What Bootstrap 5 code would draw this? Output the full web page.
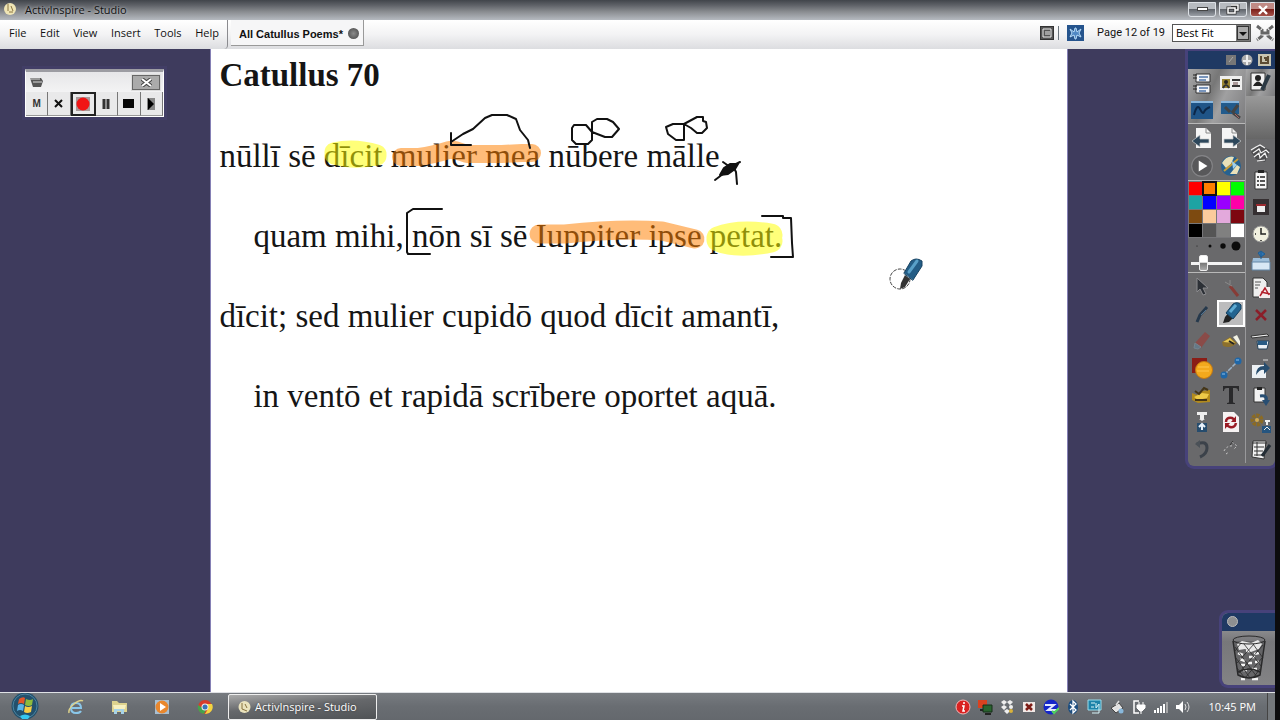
<!DOCTYPE html>
<html lang="en">
<head>
<meta charset="utf-8">
<meta name="viewport" content="width=device-width, initial-scale=1">
<title>ActivInspire - Studio</title>
<link rel="stylesheet" href="https://cdn.jsdelivr.net/npm/bootstrap@5.3.0/dist/css/bootstrap.min.css">
<style>
  body { font: 12px/16px "Open Sans", "Noto Sans", sans-serif; color: #111; background: #0c0c0e; }
  button { padding: 0; border: 0; background: none; color: inherit; }
  svg { display: block; flex: none; }
  .studio { min-height: 100vh; padding-right: 5px; }
  .titlebar { height: 20px; background: linear-gradient(#41454b 0, #5d6066 25%, #8b8e92 60%, #b5bac0 100%); }
  .titlebar h1 { font-size: 11px; line-height: 20px; text-shadow: 0 0 3px #c7cbd0; }
  .winbtns { gap: 3px; padding-top: 2px; }
  .winbtn { width: 28px; height: 15px; border: 1px solid #dde1e6; border-radius: 0 0 3px 3px; background: linear-gradient(#b7bbc0 45%, #60656c 50%, #9a9fa6); display: grid; place-items: center; }
  .winbtn.shut { width: 25px; background: linear-gradient(#c08a85 45%, #7d211b 50%, #a6534b); }
  .menubar { height: 29px; background: linear-gradient(#fff, #f3f3f4 50%, #dcdde0); }
  .menus { width: 228px; padding: 5px 8px 0 9px; border-right: 1px solid #8b8b8f; border-radius: 0 0 4px 0; }
  .menus button { height: 16px; font-size: 11px; }
  .doctab { height: 26px; margin-left: 3px; padding: 2px 4px 0 8px; border: 1px solid #999; border-width: 0 1px 1px 0; font: bold 11px/16px "Liberation Sans", sans-serif; background: #f6f6f7; gap: 5px; }
  .closedot { width: 11px; height: 11px; border-radius: 50%; background: radial-gradient(#8b8b8b, #444); }
  .pageno { font: 11px/16px Roboto, sans-serif; margin: 0 7px 0 13px; }
  .fit { width: 79px; height: 18px; border: 1px solid #555; background: #fff; }
  .fit select { appearance: none; border: 0; background: none; font-size: 11px; line-height: 16px; padding: 0 0 0 3px; width: 100%; outline: 0; }
  .fit svg { pointer-events: none; right: 0; top: 0; }
  .desk { background: #3e3b5d; overflow: hidden; }
  .sheet { width: 67.3%; margin-left: 16.5%; background: #fff; border-left: 1px solid #8580b5; border-right: 1px solid #8580b5; padding: 7px 8px 0; }
  .poem { font-family: "Liberation Serif", serif; font-size: 33px; line-height: 80px; color: #151515; white-space: nowrap; }
  .poem h2 { font: bold 33px/38px "Liberation Serif", serif; margin: 0 0 22px; }
  .poem p { margin: 0; }
  .poem .inset { padding-left: 34px; }
  .ink { left: 0; top: 0; overflow: visible; pointer-events: none; }
  .recorder { left: 25px; top: 20px; width: 139px; border: 1px solid #fff; border-top: 3px solid #9c9ca2; background: #e9e9ec; box-shadow: 0 0 0 3px #423e66; }
  .recorder header { height: 20px; padding: 0 3px; background: linear-gradient(#e6e6e8, #f3f3f4); }
  .recshut { width: 28px; height: 15px; background: #aaa; border: 1px solid #666; outline: 1px solid #ddd; display: grid; place-items: center; }
  .recbtn { flex: 1 1 0; height: 24px; display: grid; place-items: center; font: bold 10px/12px "Liberation Sans", sans-serif; color: #333; border-right: 1px solid #777; border-bottom: 1px solid #999; background: #e9e9ea; }
  .recbtn.on { border: 2px solid #222; }
  .toolbox { right: 0; top: 2px; width: 87px; padding-bottom: 3px; background: #69696b; border-radius: 0 0 6px 6px; box-shadow: 0 0 0 3px #47427a; }
  .capbar { height: 18px; background: #1f3963; gap: 5px; padding-right: 4px; }
  .tools { width: 58px; border-right: 1px solid #99999b; }
  .pair { display: grid; grid-template-columns: 1fr 1fr; grid-auto-rows: 27px; }
  .pair.roomy { grid-auto-rows: 28px; }
  .tile { display: grid; place-items: center; width: 100%; height: 100%; min-height: 27px; }
  .tile.on { border: 2px solid #fff; background: #bcbcbd; }
  .mottle { background: linear-gradient(115deg, #a9a9aa, #777 40%, #a0a0a1 60%, #7b7b7d); }
  .rule { border-bottom: 1px solid #b8b8b8; }
  .swatches { display: grid; grid-template-columns: repeat(4, 1fr); gap: 1px; padding: 1px; background: #77777a; }
  .swatches button { height: 13px; }
  .swatches .on { outline: 2px solid #111; outline-offset: -1px; }
  .nibs { height: 16px; }
  .thick { width: 100%; height: 18px; appearance: none; background: none; margin: 0; padding: 0 3px; display: block; }
  .thick::-webkit-slider-runnable-track { height: 3px; background: #f4f4f4; }
  .thick::-webkit-slider-thumb { appearance: none; width: 9px; height: 16px; margin-top: -7px; border: 1px solid #eee; border-radius: 2px; background: linear-gradient(#fff 45%, #777 50%, #aaa); }
  .sidetools { width: 29px; }
  .sidetools .tile { height: 27px; }
  .sidetools .space { height: 43px; background: linear-gradient(#999, #666); }
  .bin { right: 0; bottom: 7px; width: 53px; box-shadow: 0 0 0 3px #47427a; border-radius: 6px 0 0 6px; background: linear-gradient(#a9a9aa, #77777a 40%, #838385); overflow: hidden; }
  .bin header { height: 18px; background: #1f3963; padding: 3px 5px; }
  .taskbar { height: 28px; background: linear-gradient(#777b80, #696d72 50%, #64686d); border-top: 1px solid #dfe1e5; padding-left: 9px; }
  .quick { gap: 23px; margin-left: 25px; }
  .task { width: 149px; height: 26px; margin-left: 13px; padding: 0 9px; border: 1px solid #eee; border-radius: 2px; background: linear-gradient(175deg, #aaa, #66686b 45%, #505356); color: #fff; font-size: 11px; gap: 4px; text-shadow: 0 0 2px #333; }
  .tray { gap: 6px; }
  .clock { color: #fff; font-size: 11px; margin: 0 5px 0 12px; }
  .peek { width: 8px; height: 27px; border-left: 1px solid #444; background: #74787c; }
</style>
</head>
<body>
<div class="studio d-flex flex-column">

  <header class="titlebar d-flex align-items-start ps-1">
    <svg width="13" height="18" viewBox="0 0 13 18" class="me-2"><circle cx="6" cy="9" r="6" fill="#efe5b5"/><path d="M4 4v7M7 6l2 5M5 12h4" stroke="#8a7440" fill="none"/></svg>
    <h1 class="m-0 fw-normal">ActivInspire - Studio</h1>
    <div class="winbtns d-flex ms-auto">
      <button class="winbtn" aria-label="Minimize"><svg width="11" height="5"><rect x=".5" y=".5" width="10" height="3" fill="#fff" stroke="#444"/></svg></button>
      <button class="winbtn" aria-label="Restore"><svg width="14" height="11"><path d="M5 1h7v5H9M2 4h7v5H2z" fill="none" stroke="#333" stroke-width="3"/><path d="M5 1h7v5H9M2 4h7v5H2z" fill="none" stroke="#fff" stroke-width="1.5"/></svg></button>
      <button class="winbtn shut" aria-label="Close"><svg width="12" height="10"><path d="M2 1l8 8M10 1L2 9" stroke="#fff" stroke-width="2.4"/></svg></button>
    </div>
  </header>

  <div class="menubar d-flex align-items-start">
    <nav class="menus d-flex justify-content-between align-self-stretch">
      <button>File</button><button>Edit</button><button>View</button><button>Insert</button><button>Tools</button><button>Help</button>
    </nav>
    <div class="doctab d-flex align-items-center">All Catullus Poems*<button class="closedot" aria-label="Close flipchart"></button></div>
    <div class="d-flex align-items-center ms-auto pt-1">
      <button aria-label="Notes" class="pe-1 border-end border-secondary me-2"><svg width="14" height="14"><rect x=".5" y=".5" width="13" height="13" fill="#555" stroke="#333"/><path d="M3 3h8v8H3zM5 6h5M5 8h5" fill="none" stroke="#eee"/></svg></button>
      <button aria-label="Toggle desktop"><svg width="17" height="16"><rect width="17" height="16" fill="#25548d"/><path d="M3 4l4 3 1-4h1l1 4 4-3-2 4 2 4-4-2-1 4H8l-1-4-4 2 2-4z" fill="#4f88c4" stroke="#b9dcf7"/></svg></button>
      <span class="pageno">Page 12 of 19</span>
      <div class="fit position-relative">
        <select aria-label="Zoom"><option>Best Fit</option></select>
        <svg class="position-absolute" width="14" height="16"><rect width="14" height="16" fill="#777"/><rect x="1.500" y="1.500" width="11" height="13" fill="#aaa" stroke="#333"/><path d="M3 7h8l-4 4z" fill="#111"/></svg>
      </div>
      <button class="ms-1" aria-label="Resize"><svg width="20" height="18" viewBox="0 0 20 18"><path d="M2 2l5 4v6l-5 4M18 2l-5 4v6l5 4M7 9h6" stroke="#666" stroke-width="3" fill="none" stroke-dasharray="5 1"/></svg></button>
    </div>
  </div>

  <main class="desk flex-grow-1 d-flex position-relative">
    <article class="sheet position-relative">
      <div class="poem">
        <h2>Catullus 70</h2>
        <p>nūllī sē dīcit mulier mea nūbere mālle</p>
        <p class="inset">quam mihi, nōn sī sē Iuppiter ipse petat.</p>
        <p>dīcit; sed mulier cupidō quod dīcit amantī,</p>
        <p class="inset">in ventō et rapidā scrībere oportet aquā.</p>
      </div>
      <!-- pen and highlighter strokes over the poem -->
      <svg class="ink position-absolute" width="850" height="400">
        <g transform="translate(-211 -49)" fill="none" stroke-linecap="round" stroke-linejoin="round">
          <g opacity=".52">
            <path d="M334 152q20-5 43 2M334 155q20 6 43 1" stroke="#ff0" stroke-width="19"/>
            <path d="M401 157h18q14-2 30-7h6l12 4 35 0 20-1h10" stroke="#ff8000" stroke-width="18"/>
            <path d="M539 234h26q55-6 97-3l33 8" stroke="#ff8000" stroke-width="19"/>
            <path d="M718 238q20-8 53-3M718 240q20 8 53 1" stroke="#ff0" stroke-width="23"/>
          </g>
          <g stroke="#111" stroke-width="2">
            <path d="M451 133v12l20 0M451 145v-3L463 134 473 129 485 118 492 115H507L516 119 520 130 528 140 530 148"/>
            <path d="M592 132L586 125H574L572 128V140L576 144H588L592 140V122L597 119H607L613 122 619 129 612 137H605L592 132"/>
            <path d="M684 124L673 124 666 127 668 134 676 140H684V124L697 117H703V121L706 122 707 128 702 133H697L691 128 684 124"/>
            <path d="M442 209h-29l-6 4v39l1 2h22M762 216h21v2h8l1 25 1 14h-22"/>
            <path d="M715 180l12-9M723 162l7 5 10-5M733 166l3 6 1 12"/>
            <path d="M720 175l4-7 6-4 8 0-3 5-7 5z" fill="#111"/>
          </g>
          <circle cx="900" cy="279" r="10" stroke="#444" stroke-dasharray="3 2"/>
          <path d="M901 283l4-8 5 4-5 8-5 2z" fill="#333"/>
          <path d="M904 273l7-12q5-4 11 0l0 5-9 14z" fill="#245d86" stroke="#174362"/>
          <path d="M909 272l8-11" stroke="#59a0c8" stroke-width="3"/>
        </g>
      </svg>
    </article>

    <section class="recorder position-absolute" aria-label="Recorder">
      <header class="d-flex align-items-center justify-content-between">
        <svg width="15" height="12"><path d="M1 2h11l2 3-2 6H4z" fill="#555"/><path d="M1 3h10M4 6h9" stroke="#ddd"/></svg>
        <button class="recshut" aria-label="Close recorder"><svg width="11" height="9"><path d="M1 1l9 7M10 1L1 8" stroke="#444" stroke-width="4"/><path d="M1 1l9 7M10 1L1 8" stroke="#fff" stroke-width="2"/></svg></button>
      </header>
      <div class="d-flex">
        <button class="recbtn">M</button>
        <button class="recbtn" aria-label="Cancel"><svg width="9" height="9"><path d="M1 1l7 7M8 1L1 8" stroke="#111" stroke-width="2"/></svg></button>
        <button class="recbtn on" aria-label="Record"><svg width="14" height="14"><rect width="14" height="14" fill="#a99"/><circle cx="7" cy="7" r="6.500" fill="#f01515"/></svg></button>
        <button class="recbtn" aria-label="Pause"><svg width="9" height="10"><path d="M2 0v10M6 0v10" stroke="#333" stroke-width="3"/></svg></button>
        <button class="recbtn" aria-label="Stop"><svg width="11" height="9"><rect width="11" height="9" fill="#080808"/></svg></button>
        <button class="recbtn" aria-label="Play"><svg width="8" height="12"><rect width="8" height="12" fill="#888"/><path d="M1 0l6 6-6 6z" fill="#000"/></svg></button>
      </div>
    </section>

    <section class="toolbox position-absolute" aria-label="Main toolbox">
      <div class="capbar d-flex align-items-center justify-content-end">
        <svg width="10" height="12"><path d="M0 1h10v10H0z" fill="#777"/><path d="M3 8l4-5" stroke="#aaa"/></svg>
        <svg width="12" height="12"><circle cx="6" cy="6" r="5.500" fill="#aaa"/><path d="M6 1v10M2 7h8" stroke="#eee" stroke-width="2"/></svg>
        <svg width="13" height="12"><path d="M0 0h13v12H0z" fill="#c9c5b0"/><path d="M3 2v7h7V2M6 4h2v3" fill="none" stroke="#5b4b33" stroke-width="2"/></svg>
      </div>
      <div class="d-flex">
        <div class="tools">
          <div class="pair mottle rule">
            <button class="tile" aria-label="Browsers"><svg width="20" height="22" viewBox="0 0 20 22"><path d="M4 2h14v8H4zM4 13h14v8H4z" fill="#f2f4f8" stroke="#333"/><path d="M1 3h4M1 6h4M1 14h4M1 17h4" stroke="#222"/><path d="M7 5h9M7 8h7M7 16h9M7 19h7" stroke="#5275a8" stroke-width="1.500"/></svg></button>
            <button class="tile" aria-label="Profiles"><svg width="22" height="16"><path d="M0 1h22v14H0z" fill="#eee"/><path d="M2 4h8v9H2z" fill="#9a8530"/><circle cx="6" cy="7" r="2" fill="#222"/><path d="M3 13q3-6 6 0M12 5h8M12 11h8" stroke="#333" stroke-width="2" fill="none"/><path d="M13 7h5v3h-5z" fill="#a99"/></svg></button>
            <button class="tile" aria-label="Annotate desktop"><svg width="22" height="20"><path d="M0 1h22v18H0z" fill="#1f5487"/><path d="M0 2h22" stroke="#88b6dd" stroke-width="2"/><path d="M3 15q3-12 6-6t4 3 6-5" fill="none" stroke="#0c2748" stroke-width="2"/></svg></button>
            <button class="tile" aria-label="Desktop tools"><svg width="22" height="20"><path d="M1 1h18v13H1z" fill="#225b8c"/><path d="M1 2h18" stroke="#88b6dd" stroke-width="2"/><path d="M5 7l5 5M18 5l-6 8M13 13l7 5" stroke="#444" stroke-width="3"/><path d="M15 14l4 4" stroke="#a66"/></svg></button>
          </div>
          <div class="pair roomy rule">
            <button class="tile" aria-label="Previous page"><svg width="20" height="22"><path d="M4 1h10l5 5v15H4z" fill="#f5f5f5"/><path d="M14 1v5h5" fill="none" stroke="#888"/><path d="M17 12H8V8l-8 6 8 6v-4h9z" fill="#2d475b" stroke="#ccc" stroke-width=".7"/></svg></button>
            <button class="tile" aria-label="Next page"><svg width="20" height="22"><path d="M1 1h10l5 5v15H1z" fill="#f5f5f5"/><path d="M11 1v5h5" fill="none" stroke="#888"/><path d="M3 12h9V8l8 6-8 6v-4H3z" fill="#2d475b" stroke="#ccc" stroke-width=".7"/></svg></button>
            <button class="tile" aria-label="Start lesson"><svg width="24" height="24" viewBox="0 0 22 22"><circle cx="11" cy="11" r="9.500" fill="#58585a" stroke="#858588"/><path d="M8 6l8 5-8 5z" fill="#fff"/></svg></button>
            <button class="tile" aria-label="Express poll"><svg width="22" height="22"><circle cx="11" cy="11" r="10" fill="#27618f"/><path d="M2 8q5-8 12-6l-3 7-5 4zM10 19l7-9 3 2-3 7z" fill="#e9e1b9"/><path d="M4 16l14-12" stroke="#c79d39" stroke-width="2"/><path d="M12 6l5 4-4 4z" fill="#9ed0ee"/></svg></button>
          </div>
          <div class="swatches">
            <button style="background:#f00" aria-label="Red"></button><button class="on" style="background:#ff8000" aria-label="Orange"></button><button style="background:#ff0" aria-label="Yellow"></button><button style="background:#0f0" aria-label="Green"></button>
            <button style="background:#1da3a3" aria-label="Teal"></button><button style="background:#00f" aria-label="Blue"></button><button style="background:#90f" aria-label="Purple"></button><button style="background:#ff00a8" aria-label="Pink"></button>
            <button style="background:#7d4a10" aria-label="Brown"></button><button style="background:#fbcb9c" aria-label="Peach"></button><button style="background:#e3a9dc" aria-label="Lilac"></button><button style="background:#7d0710" aria-label="Maroon"></button>
            <button style="background:#000" aria-label="Black"></button><button style="background:#555" aria-label="Dark grey"></button><button style="background:#808080" aria-label="Grey"></button><button style="background:#fff" aria-label="White"></button>
          </div>
          <div class="nibs d-flex justify-content-around align-items-center">
            <svg width="57" height="12"><g fill="#0b0b0b"><circle cx="9" cy="6" r=".5"/><circle cx="22" cy="6" r="1.500"/><circle cx="35" cy="6" r="2.700"/><circle cx="48" cy="6" r="4.500"/></g></svg>
          </div>
          <div class="rule"><input class="thick" type="range" min="0" max="100" value="20" aria-label="Pen width"></div>
          <div class="pair">
            <button class="tile" aria-label="Select"><svg width="18" height="20"><path d="M4 1l11 10-5 0 3 6-3 1-3-6-3 3z" fill="#2c3036" stroke="#8b8b8e"/></svg></button>
            <button class="tile" aria-label="Tools"><svg width="20" height="20"><path d="M9 9l8 10" stroke="#873c36" stroke-width="3"/><path d="M4 5l7 4M9 3v4" stroke="#8a8a8a"/></svg></button>
            <button class="tile" aria-label="Pen"><svg width="18" height="20"><path d="M4 18l3-7 7-8" stroke="#26394c" stroke-width="3" fill="none"/><path d="M8 11l5-5" stroke="#507493"/></svg></button>
            <button class="tile on" aria-label="Highlighter"><svg width="23" height="23"><path d="M6 15l4-5 6 4-6 6-6 1z" fill="#222"/><path d="M7 11l7-9q5-3 8 1v4l-8 10z" fill="#236490" stroke="#15405f"/><path d="M11 10l6-7" stroke="#5eabd3" stroke-width="3"/></svg></button>
            <button class="tile" aria-label="Eraser"><svg width="20" height="20"><path d="M3 12L13 1l5 4-9 12-5 1z" fill="#8a4b48"/><path d="M3 12l6 4-3 2-4-1z" stroke="#75858f" fill="#657987"/></svg></button>
            <button class="tile" aria-label="Fill"><svg width="20" height="18"><path d="M1 10l8-5 7 6q-6 6-14 3z" fill="#8c702d"/><path d="M2 10l7-4 5 5z" fill="#e6c756"/><path d="M12 5l4-2 3 6v5z" fill="#f2f2e5"/><path d="M8 9l5 3" stroke="#222" stroke-width="2" fill="none"/></svg></button>
            <button class="tile" aria-label="Shape"><svg width="22" height="22"><path d="M1 1h15v15H1z" fill="#8a1d16"/><circle cx="13" cy="13" r="8.500" fill="#f3a91d" stroke="#c47911"/><path d="M7 10h11M6 14h12" stroke="#ffc64e"/></svg></button>
            <button class="tile" aria-label="Connector"><svg width="22" height="22"><path d="M4 18l14-14" stroke="#9db4ca" stroke-width="1.500" stroke-dasharray="5 1"/><circle cx="4" cy="18" r="3.500" fill="#1f67a8"/><circle cx="18" cy="4" r="3.500" fill="#1f67a8"/><path d="M2 17h3M16 3h3" stroke="#8fc0e7"/></svg></button>
            <button class="tile" aria-label="Insert media"><svg width="22" height="20"><path d="M1 8l5 2 4-4 9-1v12l-12 1-6-3z" fill="#b18a1d"/><path d="M3 12l8-4 7 1-2 4-9 2z" fill="#edca48"/><path d="M4 6l4 3 5-6 4 2M4 15h12" stroke="#443517" stroke-width="2" fill="none"/></svg></button>
            <button class="tile" aria-label="Text"><svg width="20" height="22"><path d="M2 2h16v5h-1q0-3-3-3h-2v14q0 1 2 1v1H6v-1q2 0 2-1V4H6q-3 0-3 3H2z" fill="#29292b"/></svg></button>
            <button class="tile" aria-label="Edit text"><svg width="16" height="22"><path d="M3 1h10v3h-3v4h1l-3 2-3-2h1V4H3z" fill="#eee"/><path d="M3 12h10v9H3z" fill="#264c6d"/><path d="M8 19v-6M5 16l3-3 3 3" stroke="#e9f2fb" stroke-width="2" fill="none"/></svg></button>
            <button class="tile" aria-label="Reset page"><svg width="18" height="22"><path d="M1 1h11l5 5v15H1z" fill="#f6f2f2"/><path d="M4 11q0-5 6-4l3 2M14 12q-1 5-6 4l-4-2" stroke="#9a1b25" stroke-width="2.500" fill="none"/><path d="M14 5v6H9zM3 18v-6h5z" fill="#9a1b25"/></svg></button>
            <button class="tile" aria-label="Undo"><svg width="20" height="20"><path d="M5 5q10-4 10 4 0 6-7 9" stroke="#3c424a" stroke-width="3" fill="none"/><path d="M3 5l5-4v8z" fill="#4b5158"/></svg></button>
            <button class="tile" aria-label="Redo"><svg width="20" height="20"><path d="M3 12q3-6 10-5M11 3l5 4-4 4M5 15l3-2" stroke="#c7c7c7" fill="none" stroke-dasharray="2 2"/><path d="M9 6l3-4" stroke="#333"/></svg></button>
          </div>
        </div>
        <div class="sidetools">
          <button class="tile mottle" aria-label="Design mode"><svg width="22" height="22"><path d="M1 1h14v17H1z" fill="#f1f1f1" stroke="#333"/><circle cx="8" cy="6" r="3" fill="#222"/><path d="M3 14q5-9 10 0z" fill="#222"/><path d="M12 18l7-15" stroke="#2b3944" stroke-width="4"/></svg></button>
          <div class="space"></div>
          <button class="tile" aria-label="Handwriting"><svg width="24" height="22"><path d="M2 10l8-7 11 5-5 12-9-3z" fill="#4c4c4e"/><path d="M2 8l5-3 4-2 5 3M4 11l6-4 2 4 5-3 3 3M5 15l5-4 1 5 5-5 2 5M8 19l8-1" stroke="#f3f3f3" fill="none" stroke-width="1.200"/></svg></button>
          <button class="tile" aria-label="Voting"><svg width="16" height="22"><path d="M2 3h12v17H2z" fill="#f7f7f7" stroke="#333"/><path d="M5 1h6v3H5z" fill="#222"/><path d="M4 8h2M7 8h5M4 12h2M7 12h5M4 16h2M7 16h5" stroke="#222" stroke-width="1.500"/></svg></button>
          <button class="tile" aria-label="Device"><svg width="18" height="18"><path d="M1 1h16v16H1z" fill="#352f31"/><path d="M5 8h8v6H5z" fill="#eee"/><path d="M4 7h10" stroke="#9b2a2f" stroke-width="2"/></svg></button>
          <button class="tile" aria-label="Clock"><svg width="18" height="18"><circle cx="9" cy="9" r="8" fill="#f1f0df" stroke="#999"/><path d="M9 3v6h5M9 15v1M3 9h1" stroke="#222" stroke-width="1.500" fill="none"/></svg></button>
          <button class="tile" aria-label="Resources"><svg width="20" height="22"><path d="M2 8h16l1 5H1z" fill="#9dbed9"/><path d="M1 12h18v8H1z" fill="#d8e8f5" stroke="#6286a6"/><path d="M10 9V2M7 3l3-2 4 3-4 3z" stroke="#1e5d93" fill="#2f75b1"/></svg></button>
          <button class="tile" aria-label="Export to PDF"><svg width="20" height="22"><path d="M2 1h10l4 4v15H2z" fill="#eee" stroke="#333"/><path d="M4 5h6M4 8h5M4 11h3" stroke="#555"/><path d="M8 10h11v11H8z" fill="#f6eded"/><path d="M9 19l5-8 4 7M10 15l9 2" stroke="#b21e2a" stroke-width="1.500" fill="none"/></svg></button>
          <button class="tile" aria-label="Delete"><svg width="14" height="14"><path d="M2 2l10 10M12 2L2 12" stroke="#8b1e29" stroke-width="2.500"/></svg></button>
          <button class="tile" aria-label="Camera"><svg width="22" height="22"><path d="M1 5l16-2 2 2-17 2z" fill="#eee" stroke="#333"/><path d="M7 10h12l-2 8H8z" fill="#eaf0f5" stroke="#24425a"/><path d="M8 12h9" stroke="#285b85" stroke-width="4"/></svg></button>
          <button class="tile" aria-label="Import"><svg width="20" height="20"><path d="M1 6h14v13H1z" fill="#edf1f4"/><path d="M5 16q0-9 8-9V3l6 6-6 6v-4q-4-1-8 5z" fill="#274d6e"/><path d="M12 1h5" stroke="#ddd"/></svg></button>
          <button class="tile" aria-label="Paste"><svg width="18" height="20"><path d="M2 2h11v14H2z" fill="#f2f2f2" stroke="#333"/><path d="M5 1h5v3H5z" fill="#222"/><path d="M8 10q8-1 6 5" stroke="#284e72" stroke-width="3" fill="none"/><path d="M10 14h8l-4 6z" fill="#284e72"/></svg></button>
          <button class="tile" aria-label="Action"><svg width="22" height="22"><circle cx="7" cy="8" r="4.500" fill="none" stroke="#8b6b24" stroke-width="4" stroke-dasharray="3 1"/><circle cx="7" cy="8" r="2" fill="#d1aa50"/><path d="M17 8v5M15 9h5" stroke="#eee" stroke-width="2"/><path d="M12 14h9v7h-9z" fill="#26557f"/><path d="M14 18l3-3 3 3" stroke="#eee" fill="none"/></svg></button>
          <button class="tile" aria-label="Notebook"><svg width="22" height="22"><path d="M3 2l13 0-2 18-12-2z" fill="#f2f2f2" stroke="#333"/><path d="M2 4h15M4 8h10M4 12h9M4 16h8M7 3v14" stroke="#333"/><path d="M12 17l8-11" stroke="#242d35" stroke-width="3"/></svg></button>
        </div>
      </div>
    </section>

    <section class="bin position-absolute" aria-label="Recycle bin">
      <header><svg width="11" height="11"><circle cx="5.500" cy="5.500" r="5" fill="#8d8f91" stroke="#bbb"/></svg></header>
      <svg class="mx-auto" width="42" height="54" viewBox="0 0 40 54">
        <path d="M4 10l5 34q11 6 22 0l5-34z" fill="#4e4e50" opacity=".5"/>
        <path d="M8 13l5-3 9 2 7-3 4 4-3 5-8 3-6-3-6 1z" fill="#e8e8e8"/>
        <path d="M9 22l5 2M17 20h5M25 23l5-1M11 28l5 2M20 26h6M12 34h4M19 32h4M26 31h4M14 39h4M23 38h5M12 48h4M23 48h6" stroke="#f5f5f5" stroke-width="2.500"/>
        <g fill="none" stroke="#29292a"><ellipse cx="20" cy="9" rx="16" ry="4"/><path d="M4 10l5 34q11 6 22 0l5-34M9 41q11-6 22 0" stroke-width="1.500"/><path d="M6 16l22 30M7 27l14 20M15 13l17 22M24 13l10 14M34 14L10 42M25 13L8 32M33 27L16 47M31 38l-7 9M12 12L6 20M8 37l7 9" stroke-width=".8"/></g>
      </svg>
    </section>
  </main>

  <footer class="taskbar d-flex align-items-center">
    <button aria-label="Start"><svg width="32" height="27" viewBox="0 0 32 27"><circle cx="16" cy="13" r="13.500" fill="#23506c"/><circle cx="16" cy="13" r="12" fill="none" stroke="#4b84a0"/><path d="M10 6q4-3 6-1l-1 6q-3-2-6 0z" fill="#e1562a"/><path d="M17 6q4 2 7 0l-1 6q-3 2-7 0z" fill="#8dbb3d"/><path d="M9 12q3-2 6 0l-1 6q-3-2-6 0z" fill="#5ab4e7"/><path d="M16 13q3 2 7 0l-1 6q-4 2-7 0z" fill="#f7cc45"/><path d="M11 23q5-3 10 0l-2 3h-6z" fill="#36c8f0"/></svg></button>
    <div class="quick d-flex align-items-center">
      <button aria-label="Internet Explorer"><svg width="20" height="20"><path d="M5 11h10q0-5-5-5t-5 5 5 5q4 0 5-2" fill="none" stroke="#8ac7ea" stroke-width="2"/><path d="M3 16Q2 12 8 7t9-3" fill="none" stroke="#ded38b" stroke-width="1.500"/></svg></button>
      <button aria-label="Explorer"><svg width="20" height="20"><path d="M3 4h5l2 2h8v9H3z" fill="#ddd28e"/><path d="M4 8h13l-1 4H5z" fill="#f7f0c0"/><path d="M5 12h10v5h-3v-3H8v3H5z" fill="#a6d2e8"/></svg></button>
      <button aria-label="Media Player"><svg width="20" height="20"><path d="M3 3h14v14H3z" fill="#a8bfd2"/><circle cx="10" cy="10" r="6.500" fill="#e9872d"/><path d="M8 6l6 4-6 4z" fill="#fff"/></svg></button>
      <button aria-label="Chrome"><svg width="20" height="20"><circle cx="10" cy="10" r="7" fill="#d83c2b"/><path d="M3 8a7 7 0 0 0 6 9l3-6-6-1z" fill="#45a34d"/><path d="M10 17a7 7 0 0 0 7-10h-6l2 5z" fill="#f4d440"/><circle cx="10" cy="10" r="3.500" fill="#eee"/><circle cx="10" cy="10" r="2.500" fill="#3973b9"/></svg></button>
    </div>
    <button class="task d-flex align-items-center"><svg width="13" height="14"><circle cx="6.500" cy="7" r="6" fill="#eae3bd"/><path d="M4 3v6l5 2M7 4l2 4" fill="none" stroke="#86713c"/></svg>ActivInspire - Studio</button>
    <div class="tray d-flex align-items-center ms-auto">
      <svg width="16" height="16"><circle cx="8" cy="8" r="7" fill="#d92222" stroke="#f2b6b6"/><path d="M9 3v2M7 7h2l-1 5h2" stroke="#fff" stroke-width="1.500" fill="none"/></svg>
      <svg width="16" height="16"><path d="M1 1h9v8H1z" fill="#d94220"/><path d="M6 6h9v7H6z" fill="#29642f" stroke="#162f19"/><path d="M3 11h3M8 15h6" stroke="#222" stroke-width="2"/></svg>
      <svg width="16" height="16"><path d="M2 3l3-2 3 2-3 3zM8 3l3-2 3 2-3 3zM2 8l3-2 3 2-3 3zM5 12l3-2 3 2-3 3z" fill="#eee"/><circle cx="12" cy="8" r="2" fill="#eee"/><circle cx="12" cy="12" r="2" fill="#d9b23a"/></svg>
      <svg width="16" height="16"><path d="M2 3h12v10H2z" fill="#f2e9e6"/><path d="M5 5l6 6M11 5l-6 6" stroke="#7e1c16" stroke-width="2.500"/></svg>
      <svg width="16" height="16"><circle cx="8" cy="8" r="7.500" fill="#1426c9"/><path d="M2 6h9l-6 5h9" stroke="#e3e9ff" stroke-width="2" fill="none"/><path d="M9 12l2 2 5-5" stroke="#54d45a" stroke-width="2" fill="none"/></svg>
      <svg width="16" height="16"><ellipse cx="8" cy="8" rx="5" ry="7" fill="#1d4e80"/><path d="M5 5l6 6-3 3V2l3 3-6 6" stroke="#fff" stroke-width="1.300" fill="none"/></svg>
      <svg width="16" height="16"><path d="M1 1h13v10H1z" fill="#1d83a9" stroke="#9bddec"/><path d="M4 4h4M4 8h3M9 4v5l3-4v9H5" stroke="#d8f5fa" fill="none"/></svg>
      <svg width="16" height="16"><path d="M2 9l8-5 4 5-7 5z" fill="#e4e4e4" stroke="#444"/><path d="M7 6l3-4M6 10l3-2" stroke="#ddd" stroke-width="1.500"/><circle cx="12" cy="12" r="2.500" fill="#88b8dc"/></svg>
      <svg width="16" height="16"><path d="M8 2H3v12h5" fill="none" stroke="#fff" stroke-width="1.500"/><path d="M6 6h8v3l-3 3H9L6 9zM8 3v3M12 3v3M10 12v3" fill="#fff" stroke="#fff"/></svg>
      <svg width="16" height="16"><path d="M2 14v-3M5 14V9M8 14V7M11 14V5" stroke="#fff" stroke-width="2"/><path d="M14 14V3" stroke="#bbb" stroke-width="1.500"/></svg>
      <svg width="16" height="16"><path d="M1 6h3l4-4v12l-4-4H1z" fill="#fff"/><path d="M10 5q2 3 0 6M12 3q4 5 0 10" stroke="#ddd" fill="none"/></svg>
      <span class="clock">10:45 PM</span>
      <button class="peek" aria-label="Show desktop"></button>
    </div>
  </footer>
</div>
<script src="https://cdn.jsdelivr.net/npm/bootstrap@5.3.0/dist/js/bootstrap.bundle.min.js"></script>
</body>
</html>
